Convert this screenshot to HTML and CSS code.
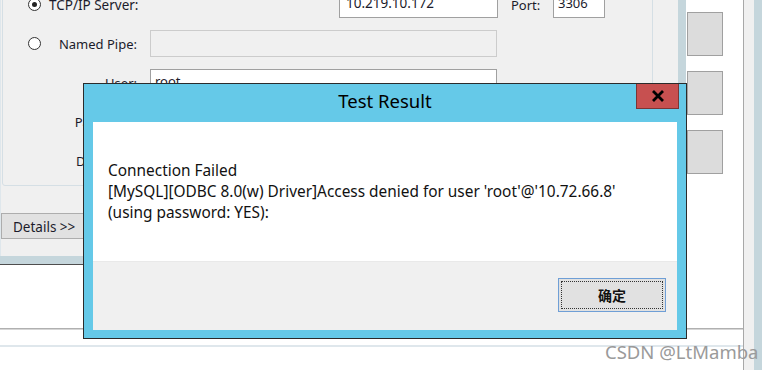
FILE: index.html
```
<!DOCTYPE html>
<html>
<head>
<meta charset="utf-8">
<link rel="stylesheet" href="styles.css">
</head>
<body>
<div class="screen">
  <div class="content">
    <div class="top">
      <div class="window">
        <div class="panel">
          <div class="form">
            <div class="group">
              <div class="row row-tcp">
                <span class="radio checked"></span>
                <span class="lbl-tcp">TCP/IP Server:</span>
                <span class="input ip">10.219.10.172</span>
                <span class="lbl-port">Port:</span>
                <span class="input port">3306</span>
              </div>
              <div class="row row-pipe">
                <span class="radio"></span>
                <span class="label label-pipe">Named Pipe:</span>
                <span class="input wide disabled"></span>
              </div>
              <div class="row">
                <span class="label">User:</span>
                <span class="input wide">root</span>
              </div>
              <div class="row">
                <span class="label">Password:</span>
                <span class="input wide"></span>
              </div>
              <div class="row">
                <span class="label">Database:</span>
                <span class="input wide"></span>
              </div>
            </div>
            <div class="details-bar"><span class="details">Details &gt;&gt;</span></div>
          </div>
          <div class="vstrip"></div>
        </div>
        <div class="band"></div>
      </div>
      <div class="side">
        <span class="side-btn"></span>
        <span class="side-btn"></span>
        <span class="side-btn"></span>
      </div>
    </div>
    <div class="blank1"></div>
    <div class="rule1"></div>
    <div class="blank2"></div>
    <div class="rule2"></div>
  </div>
  <div class="vline"></div>
  <div class="lightcol"></div>
  <div class="strip2"></div>
</div>

<div class="dialog">
  <div class="titlebar">
    <span></span>
    <span class="title">Test Result</span>
    <span class="close"><svg width="14" height="12" viewBox="0 0 14 12"><path d="M2 1 L12 11 M12 1 L2 11" stroke="#000" stroke-width="2.8" fill="none"/></svg></span>
  </div>
  <div class="client">
    <div class="msg">
      <div>Connection Failed</div>
      <div>[MySQL][ODBC 8.0(w) Driver]Access denied for user 'root'@'10.72.66.8'</div>
      <div>(using password: YES):</div>
    </div>
    <div class="footer">
      <span class="ok">确定</span>
    </div>
  </div>
</div>

<div class="watermark">CSDN @LtMamba</div>
</body>
</html>
```

FILE: styles.css
```
* { box-sizing: border-box; }
html, body { margin: 0; padding: 0; }
body {
  width: 778px;
  height: 370px;
  overflow: hidden;
  background: #fff;
  font-family: "Noto Sans", "Open Sans", sans-serif;
  position: relative;
}
.screen { display: flex; width: 778px; height: 370px; }
.content { width: 743px; display: flex; flex-direction: column; }
.top { display: flex; height: 265px; }
.window { width: 686px; display: flex; flex-direction: column; }
.panel { height: 256px; display: flex; }
.form {
  width: 678px;
  background: #f0f0f0;
  overflow: hidden;
  border-left: 1px solid #dfe7ec;
}
.vstrip { width: 8px; background: #c5d6dc; }
.band { height: 9px; background: #c5d6dc; border-bottom: 1px solid #4e4e4e; }
.side {
  flex: 1;
  background: #fff;
  display: flex;
  flex-direction: column;
  gap: 15px;
  padding: 12px 0 0 1px;
}
.side-btn {
  display: block;
  width: 36px;
  height: 44px;
  background: #dcdcdc;
  border: 1px solid #a0a0a0;
}
.blank1 { height: 63px; }
.rule1 { height: 2px; background: #b0b0b0; border-bottom: 1px solid #d6d6d6; }
.blank2 { height: 15px; }
.rule2 { height: 2px; background: #dfe7ec; }
.vline { width: 1px; background: #a8a8a8; }
.lightcol { width: 10px; background: #f0f0f0; }
.strip2 { width: 8px; background: #c5d6dc; }

.group {
  margin: -12px 0 0 1px;
  width: 651px;
  border: 1px solid #d5dfe5;
  border-radius: 3px;
  padding: 2px 0 11px 0;
  display: flex;
  flex-direction: column;
  gap: 12px;
  font-size: 13px;
  color: #1b1b2b;
}
.row { display: flex; align-items: center; height: 27px; }
.row-tcp, .row-pipe { padding-left: 25px; }
.radio {
  width: 13px;
  height: 13px;
  border: 1px solid #333;
  border-radius: 50%;
  background: #fff;
  display: flex;
  align-items: center;
  justify-content: center;
  flex: none;
}
.radio.checked::before {
  content: "";
  width: 5px;
  height: 5px;
  border-radius: 50%;
  background: #222;
}
.lbl-tcp { width: 298px; padding-left: 8px; flex: none; font-size: 13.5px; }
.lbl-port { width: 55px; padding-left: 13px; flex: none; }
.label { width: 134px; text-align: right; flex: none; }
.label-pipe { width: 96px; }
.input {
  height: 27px;
  background: #fff;
  border: 1px solid #a0a0a0;
  padding: 2px 0 0 4px;
  line-height: 18px;
  flex: none;
}
.ip { width: 159px; padding-left: 6px; font-size: 13.5px; }
.port { width: 52px; }
.wide { width: 347px; margin-left: 13px; }
.disabled { background: #f0f0f0; border-color: #cccccc; }
.details-bar { margin-top: 27px; }
.details {
  display: inline-block;
  width: 100px;
  height: 26px;
  background: #e1e1e1;
  border: 1px solid #adadad;
  font-size: 13.5px;
  line-height: 26px;
  padding-left: 11px;
  color: #1b1b2b;
}

.dialog {
  position: absolute;
  left: 83px;
  top: 83px;
  width: 604px;
  height: 256px;
  border: 1px solid #2b2b2b;
  background: #65c9e8;
  display: flex;
  flex-direction: column;
  padding: 0 9px 8px 9px;
}
.titlebar {
  height: 38px;
  margin: 0 -9px;
  display: grid;
  grid-template-columns: 1fr auto 1fr;
}
.title {
  font-size: 18.5px;
  line-height: 34px;
  color: #000;
}
.close {
  justify-self: end;
  align-self: start;
  margin-right: 7px;
  width: 43px;
  height: 25px;
  background: #c75050;
  border: 1px solid #7a3535;
  border-top: none;
  display: flex;
  align-items: center;
  justify-content: center;
}
.close svg { display: block; }
.client { flex: 1; display: flex; flex-direction: column; background: #fff; }
.msg {
  height: 139px;
  padding: 38px 0 0 15px;
  font-size: 15.4px;
  line-height: 21px;
  color: #111;
}
.footer {
  flex: 1;
  background: #f0f0f0;
  border-top: 1px solid #e9e9e9;
  display: flex;
  justify-content: flex-end;
  align-items: flex-start;
  padding: 16px 11px 0 0;
}
.ok {
  width: 108px;
  height: 34px;
  background: #e1e1e1;
  border: 1px solid #6f9fd6;
  outline: 1px dotted #333;
  outline-offset: -4px;
  display: flex;
  align-items: center;
  justify-content: center;
  font-family: "Noto Sans CJK SC", sans-serif;
  font-size: 14px;
  font-weight: 700;
  color: #111;
}
.watermark {
  position: absolute;
  left: 605px;
  top: 339px;
  font-size: 18.5px;
  color: #9a9a9a;
  white-space: nowrap;
}
```
